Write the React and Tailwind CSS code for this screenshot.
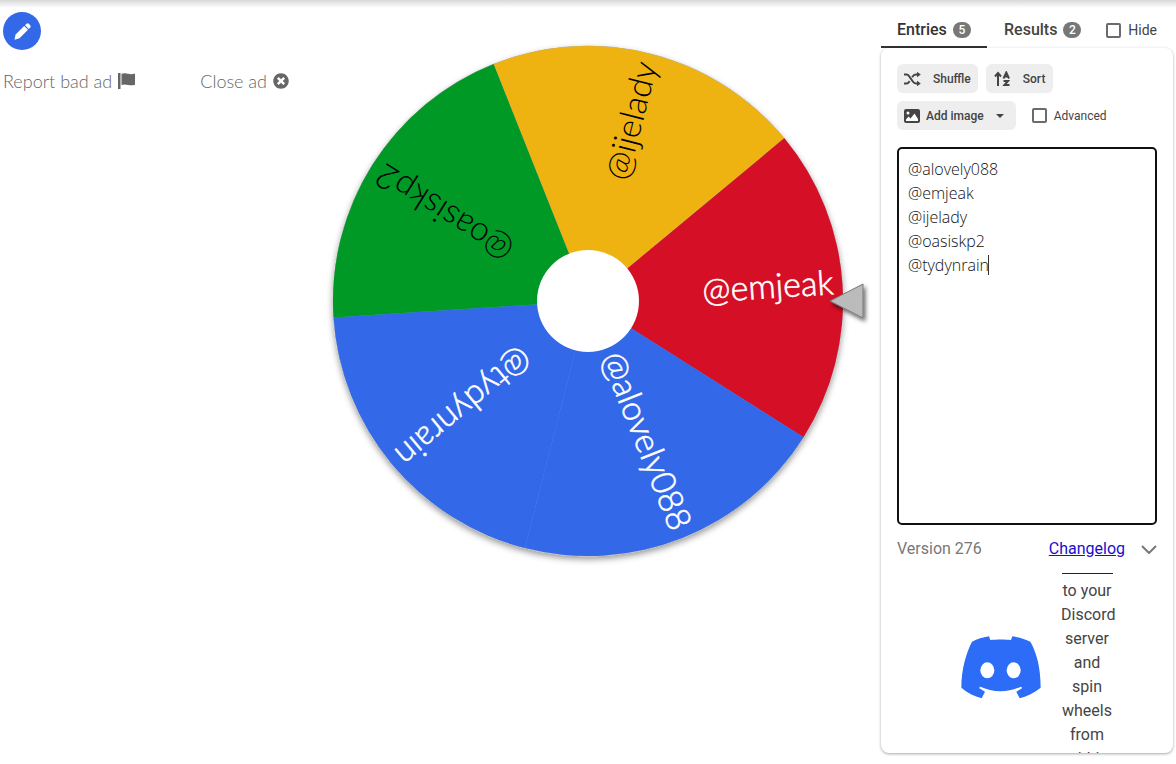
import React from 'react';
import { FaTimesCircle } from 'react-icons/fa';

const SLICES = [
  { name: '@emjeak', start: -39.7, color: '#d50f25', text: '#ffffff' },
  { name: '@alovely088', start: 32.3, color: '#3369e8', text: '#ffffff' },
  { name: '@tydynrain', start: 104.3, color: '#3369e8', text: '#ffffff' },
  { name: '@oasiskp2', start: 176.3, color: '#009925', text: '#000000' },
  { name: '@ijelady', start: 248.3, color: '#eeb211', text: '#000000' },
];

const ENTRIES = ['@alovely088', '@emjeak', '@ijelady', '@oasiskp2', '@tydynrain'];

const RADIUS = 255;

const point = (angle) => {
  const rad = (angle * Math.PI) / 180;
  return `${RADIUS * Math.cos(rad)} ${RADIUS * Math.sin(rad)}`;
};

/**
 * Wheel Component
 * Spinner with one slice per entry and the pointer on its right side
 */
const Wheel = () => (
  <svg viewBox="-262 -262 546 546" className="w-full max-w-[546px]" role="img" aria-label="Wheel">
    <defs>
      <filter id="wheelShadow" x="-10%" y="-10%" width="120%" height="120%">
        <feDropShadow dx="0" dy="3" stdDeviation="3" floodColor="#000" floodOpacity="0.4" />
      </filter>
      <filter id="pointerShadow" x="-30%" y="-30%" width="160%" height="160%">
        <feDropShadow dx="2" dy="3" stdDeviation="2" floodColor="#000" floodOpacity="0.6" />
      </filter>
    </defs>
    <circle r={RADIUS} fill="#7297ef" stroke="#bbb" strokeWidth="1" filter="url(#wheelShadow)" />
    {SLICES.map(({ name, start, color, text }) => (
      <g key={name}>
        <path d={`M0 0L${point(start)}A${RADIUS} ${RADIUS} 0 0 1 ${point(start + 72)}Z`} fill={color} />
        <text
          transform={`rotate(${start + 36})`}
          x="246"
          y="9"
          textAnchor="end"
          fill={text}
          stroke={text}
          strokeWidth={text === '#ffffff' ? 0.6 : 0}
          className="font-['Lato',sans-serif] text-[34px] font-light"
        >
          {name}
        </text>
      </g>
    ))}
    <circle r="51" fill="#fff" />
    <path d="M242 0L275 -17V17Z" fill="#bbb" stroke="#777" strokeWidth="1" filter="url(#pointerShadow)" />
  </svg>
);

const PencilIcon = () => (
  <svg viewBox="0 0 17 17" className="w-[17px] h-[17px]" fill="currentColor">
    <path d="M11 2.200L12.300 .9Q13.600 -.2 15 1L16 2.100Q17.200 3.500 16 4.800L14.800 6Z" />
    <path d="M10.200 3L14 6.800L5.500 15.300L.5 16.800L1.600 11.500Z" />
  </svg>
);

const FlagIcon = () => (
  <svg viewBox="0 0 17 16" className="w-[17px] h-4" fill="currentColor">
    <path d="M0 0H2.500V16H0Z" />
    <path d="M3.500 .8Q6.500 -.2 10 .8Q13.500 1.600 17 .6V11.800Q13.500 12.800 10 12Q6.500 11.200 3.500 12Z" />
  </svg>
);

const ShuffleIcon = () => (
  <svg viewBox="0 0 17 14" className="w-[17px] h-3.5" fill="none" stroke="currentColor" strokeWidth="2">
    <path d="M0 2.500H2.500Q4 2.500 5 4L9 9.800Q10.200 11.500 12 11.500H14" />
    <path d="M0 11.500H2.500Q4 11.500 5 10L5.600 9.200M8.200 5.200L9 4Q10.200 2.500 12 2.500H14" />
    <path d="M13 -.2L16.800 2.500L13 5.300ZM13 8.700L16.800 11.500L13 14.200Z" fill="currentColor" stroke="none" />
  </svg>
);

const SortIcon = () => (
  <svg viewBox="0 0 17 16" className="w-[17px] h-4" fill="none" stroke="currentColor" strokeWidth="2">
    <path d="M4 15V2M1 5.500L4 2L7 5.500" />
    <path d="M9.500 7.500L12.300 1.500L15 7.500M10.500 5.500H14" />
    <path d="M9.500 10H14L10.500 14H15.500" />
  </svg>
);

const ImageIcon = () => (
  <svg viewBox="0 0 16 14" className="w-4 h-3.5">
    <rect width="16" height="14" rx="2" fill="currentColor" />
    <circle cx="4" cy="4" r="1.500" fill="#fff" />
    <path d="M2 12V10.500L4.500 7.500L6.500 9.500L10.500 4.500L14 10V12Z" fill="#fff" />
  </svg>
);

const DiscordIcon = () => (
  <svg viewBox="34 32 240 188" className="w-20 shrink-0">
    <path
      fill="#2c6cf6"
      d="M118 33L122 44C140 42 168 42 184 44L188 33C208 36 226 41 242 49C260 80 273 125 273 187C252 203 230 214 210 219L200 199L218 188L214 184C195 192 175 198 153 198C131 198 110 192 92 184L88 188L106 199L96 219C74 213 52 202 35 187C35 130 50 82 67 49C83 41 99 36 118 33Z"
    />
    <ellipse cx="113" cy="135" rx="21" ry="24" fill="#fff" />
    <ellipse cx="192" cy="135" rx="21" ry="24" fill="#fff" />
  </svg>
);

const ToolButton = ({ children, className = '' }) => (
  <button type="button" className={`flex items-center h-[29px] rounded-md bg-[#eeeeee] text-xs font-medium ${className}`}>
    {children}
  </button>
);

const CheckBox = ({ label, className }) => (
  <label className={`flex items-center ${className}`}>
    <input type="checkbox" className="appearance-none w-[15px] h-[15px] border-2 border-[#6b6b6b] rounded-xs bg-white" />
    {label}
  </label>
);

const Badge = ({ children }) => (
  <span className="flex items-center justify-center w-[18px] h-4 rounded-full bg-[#777777] text-white text-xs font-medium">
    {children}
  </span>
);

const AdColumn = () => (
  <aside className="w-[300px] shrink-0 pl-[3px] pt-3">
    <button type="button" aria-label="Customize" className="flex items-center justify-center w-[38px] h-[38px] rounded-full bg-[#3369e8] text-white">
      <PencilIcon />
    </button>
    <div className="flex items-center justify-between pt-[17px] pr-[11px] font-['Lato',sans-serif] text-lg font-light text-[#666]">
      <button type="button" className="flex items-center gap-1.5">
        Report bad ad <FlagIcon />
      </button>
      <button type="button" className="flex items-center gap-1.5">
        Close ad <FaTimesCircle className="w-4 h-4" />
      </button>
    </div>
  </aside>
);

const Promo = () => (
  <div className="flex-1 min-h-0 overflow-hidden flex items-start gap-5 pl-16 pt-3">
    <div className="pt-[63px]">
      <DiscordIcon />
    </div>
    <div className="text-center">
      <div className="w-[51px] mx-auto border-b border-[#1a1099]" />
      <p className="w-[52px] pt-[5px] leading-6">to your Discord server and spin wheels from within</p>
    </div>
  </div>
);

const EntriesPanel = () => (
  <section className="w-[292px] shrink-0 mr-[3px] flex flex-col min-h-0 text-[#444]">
    <div className="flex items-center h-11 mt-1">
      <button type="button" className="flex items-center gap-1.5 h-full w-[106px] pl-4 pt-2.5 border-b-2 border-[#333] text-base font-medium text-[#333]">
        Entries <Badge>5</Badge>
      </button>
      <button type="button" className="flex items-center gap-1.5 h-full pl-[17px] pt-2.5 border-b-2 border-transparent text-base font-medium">
        Results <Badge>2</Badge>
      </button>
      <CheckBox label="Hide" className="gap-[7px] ml-auto mr-4 pt-2 text-sm" />
    </div>
    <div className="flex-1 min-h-0 flex flex-col px-4 pt-4 rounded-lg shadow-[0_1px_3px_rgba(0,0,0,0.35)]">
      <div className="flex flex-wrap items-center gap-2">
        <ToolButton className="gap-3 px-[7px]">
          <ShuffleIcon /> Shuffle
        </ToolButton>
        <ToolButton className="gap-3 px-2">
          <SortIcon /> Sort
        </ToolButton>
        <ToolButton className="gap-1.5 pl-[7px] pr-3">
          <ImageIcon /> Add image
          <svg viewBox="0 0 8 4" className="w-2 h-1 ml-1.5">
            <path d="M0 0H8L4 4Z" fill="currentColor" />
          </svg>
        </ToolButton>
        <CheckBox label="Advanced" className="gap-[7px] ml-2 text-xs" />
      </div>
      <div className="relative mt-[17px]">
        <textarea
          aria-label="Entries"
          defaultValue={ENTRIES.join('\n')}
          className="block w-full h-[378px] px-[9px] py-2 resize-none rounded-[5px] border-2 border-[#111] outline-none font-['Open_Sans',sans-serif] text-base font-light leading-6 text-[#111]"
        />
        <span className="absolute left-[91px] top-[108px] w-px h-5 bg-[#333]" />
      </div>
      <div className="flex items-center pt-3 text-base leading-6 text-[#777]">
        Version 276
        <a href="#changelog" className="ml-auto text-[#1a0dcc] underline">Changelog</a>
        <svg viewBox="0 0 16 9" className="w-4 h-[9px] ml-4" fill="none" stroke="currentColor" strokeWidth="2">
          <path d="M1 1L8 8L15 1" />
        </svg>
      </div>
      <Promo />
    </div>
  </section>
);

export const App = () => (
  <div className="h-screen flex flex-col bg-white font-['Roboto',sans-serif] overflow-hidden">
    <div className="h-2 -mb-2 shrink-0 bg-linear-to-b from-[#d8d8d8] to-white" />
    <div className="flex-1 min-h-0 flex pb-[11px]">
      <AdColumn />
      <main className="flex-1 min-w-0 flex justify-end items-start pt-[39px] pr-[9px]">
        <Wheel />
      </main>
      <EntriesPanel />
    </div>
  </div>
);

export default App;
